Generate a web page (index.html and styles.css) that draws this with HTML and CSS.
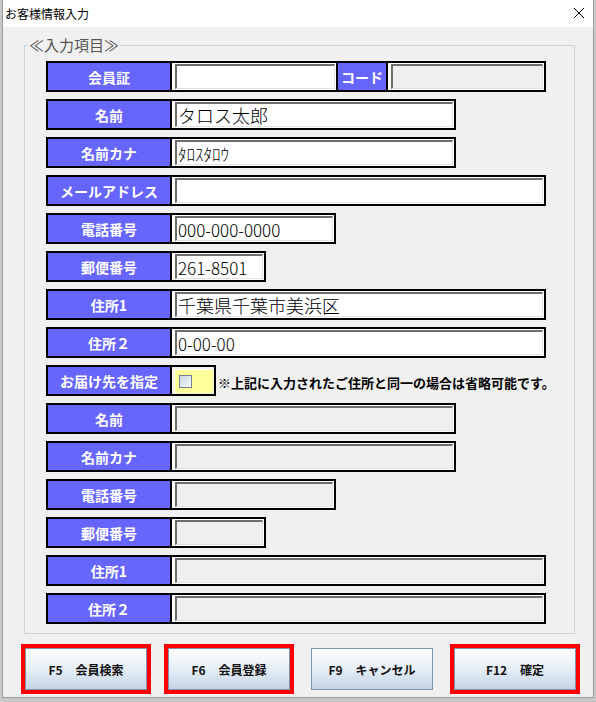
FILE: index.html
```html
<!DOCTYPE html>
<html lang="ja">
<head>
  <meta charset="UTF-8" />
  <title>お客様情報入力</title>
  <link rel="stylesheet" href="styles.css">
</head>
<body>
  <div class="window">
    <div class="titlebar">
      <span class="title">お客様情報入力</span>
      <svg class="close" width="12" height="12" viewBox="0 0 12 12">
        <path d="M1 1 L11 11 M11 1 L1 11" stroke="#000" stroke-width="1" fill="none"/>
      </svg>
    </div>

    <div class="content">
      <fieldset class="group">
        <legend>≪入力項目≫</legend>
        <div class="rows">
          <div class="row w-full">
            <div class="label">会員証</div>
            <div class="cell cell-code"><div class="field"></div></div>
            <div class="label label-code">コード</div>
            <div class="cell"><div class="field off"></div></div>
          </div>

          <div class="row w-mid">
            <div class="label">名前</div>
            <div class="cell"><div class="field">タロス太郎</div></div>
          </div>

          <div class="row w-mid">
            <div class="label">名前カナ</div>
            <div class="cell"><div class="field kana">ﾀﾛｽﾀﾛｳ</div></div>
          </div>

          <div class="row w-full">
            <div class="label">メールアドレス</div>
            <div class="cell"><div class="field"></div></div>
          </div>

          <div class="row w-tel">
            <div class="label">電話番号</div>
            <div class="cell"><div class="field num">000-000-0000</div></div>
          </div>

          <div class="row w-zip">
            <div class="label">郵便番号</div>
            <div class="cell"><div class="field num">261-8501</div></div>
          </div>

          <div class="row w-full">
            <div class="label">住所1</div>
            <div class="cell"><div class="field">千葉県千葉市美浜区</div></div>
          </div>

          <div class="row w-full">
            <div class="label">住所２</div>
            <div class="cell"><div class="field num">0-00-00</div></div>
          </div>

          <div class="line">
            <div class="row w-chk">
              <div class="label">お届け先を指定</div>
              <div class="cell cell-flag"><div class="flag"><span class="check"></span></div></div>
            </div>
            <span class="note">※上記に入力されたご住所と同一の場合は省略可能です。</span>
          </div>

          <div class="row w-mid">
            <div class="label">名前</div>
            <div class="cell"><div class="field off"></div></div>
          </div>

          <div class="row w-mid">
            <div class="label">名前カナ</div>
            <div class="cell"><div class="field off"></div></div>
          </div>

          <div class="row w-tel">
            <div class="label">電話番号</div>
            <div class="cell"><div class="field off"></div></div>
          </div>

          <div class="row w-zip">
            <div class="label">郵便番号</div>
            <div class="cell"><div class="field off"></div></div>
          </div>

          <div class="row w-full">
            <div class="label">住所1</div>
            <div class="cell"><div class="field off"></div></div>
          </div>

          <div class="row w-full">
            <div class="label">住所２</div>
            <div class="cell"><div class="field off"></div></div>
          </div>
        </div>
      </fieldset>

      <div class="buttons">
        <button class="btn marked"><span class="key">F5</span>会員検索</button>
        <button class="btn marked"><span class="key">F6</span>会員登録</button>
        <button class="btn"><span class="key">F9</span>キャンセル</button>
        <button class="btn marked"><span class="key">F12</span>確定</button>
      </div>
    </div>
  </div>
</body>
</html>
```

FILE: styles.css
```css
body {
  margin: 0;
  background: #c9c9c9;
  font-family: "Noto Sans CJK JP", "Noto Sans", sans-serif;
}
.window {
  margin-left: 2px;
  width: 590px;
  height: 697px;
  border: 1px solid #9a9a9a;
  border-top: none;
  background: #f0f0f0;
}
.titlebar {
  height: 27px;
  background: #fff;
  display: flex;
  align-items: center;
  justify-content: space-between;
  padding: 0 8px 0 2px;
}
.title {
  font-size: 12px;
  color: #000;
}
.close {
  margin-top: -1px;
}
.content {
  padding: 9px 0 0 21px;
}
.group {
  margin: 0;
  width: 551px;
  box-sizing: border-box;
  padding: 7px 0 9px 0;
  border: 1px solid #c9d3dd;
}
.group legend {
  margin-left: 3px;
  padding: 0 1px;
  font-size: 15px;
  line-height: 18px;
  color: #555;
}
.rows {
  margin-left: 21px;
  display: flex;
  flex-direction: column;
  align-items: flex-start;
  gap: 7px;
}
.row {
  display: flex;
  height: 31px;
  box-sizing: border-box;
  border: 2px solid #000;
  background: #fff;
}
.w-full { width: 500px; }
.w-mid { width: 410px; }
.w-tel { width: 290px; }
.w-zip { width: 220px; }
.w-chk { width: 170px; }
.label {
  flex: 0 0 124px;
  box-sizing: border-box;
  border-right: 2px solid #000;
  background: #6666ff;
  color: #fff;
  font-weight: bold;
  font-size: 14px;
  display: flex;
  align-items: center;
  justify-content: center;
}
.label-code {
  flex: 0 0 50px;
}
.cell {
  flex: 1;
  display: flex;
  padding: 1px 1px 1px 3px;
}
.cell-code {
  flex: 0 0 166px;
  box-sizing: border-box;
  border-right: 2px solid #000;
}
.field {
  flex: 1;
  border-style: solid;
  border-width: 2px 1px 1px 2px;
  border-color: #6d6d6d #e3e3e3 #e3e3e3 #6d6d6d;
  background: #fff;
  font-size: 18px;
  font-weight: 300;
  color: #000;
  padding-left: 1px;
  display: flex;
  align-items: center;
  white-space: nowrap;
  overflow: hidden;
}
.field.num {
  font-size: 17px;
}
.field.kana {
  font-size: 17px;
}
.field.off {
  background: #efefef;
}
.cell-flag {
  padding: 2px 1px 1px 2px;
  background: #f0f0f0;
}
.flag {
  flex: 1;
  background: #ffff99;
  border-left: 1px solid #fff;
  border-top: 1px solid #fff;
  display: flex;
  align-items: center;
  padding-left: 4px;
}
.check {
  width: 11px;
  height: 11px;
  border: 1px solid #70839a;
  background: linear-gradient(135deg, #c9d4e1, #f7f9fb);
}
.line {
  display: flex;
  align-items: center;
  gap: 2px;
}
.note {
  font-size: 13px;
  font-weight: bold;
  color: #000;
  padding-top: 3px;
}
.buttons {
  display: flex;
  gap: 21px;
  margin-top: 14px;
  padding-left: 1px;
}
.btn {
  width: 122px;
  height: 42px;
  border: 1px solid #8193a8;
  background: linear-gradient(#fdfeff, #e6eef7 50%, #c3d3e6);
  font-family: "Noto Sans CJK JP", "Noto Sans", sans-serif;
  font-size: 12px;
  font-weight: bold;
  color: #111;
  padding: 0;
}
.btn .key {
  margin-right: 13px;
}
.btn.marked {
  outline: 4px solid #ff0000;
}
```
